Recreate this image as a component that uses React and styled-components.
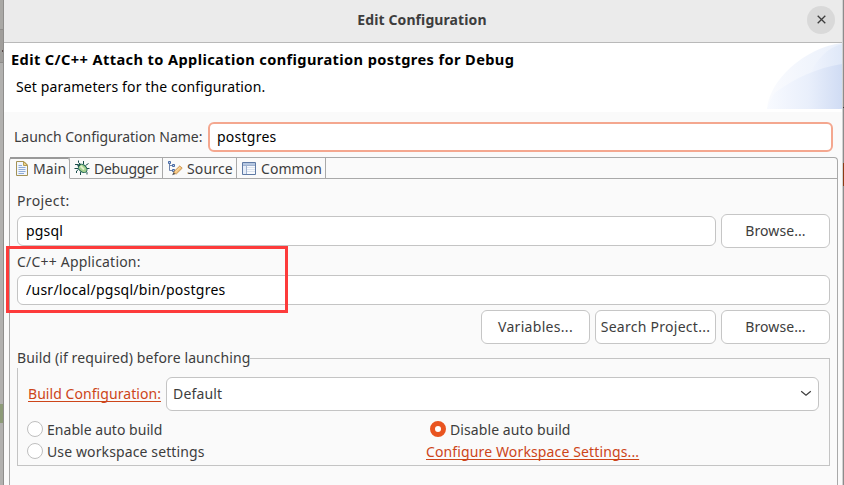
import React from 'react';
import styled, { createGlobalStyle, css } from 'styled-components';

const Global = createGlobalStyle`
  *, *::before, *::after { box-sizing: border-box; }
  body {
    margin: 0;
    overflow: hidden;
    font: 14px/20px "Noto Sans", "Open Sans", sans-serif;
    color: #3d3d3d;
    background: #fafafa;
  }
  button, input { font: inherit; color: inherit; }
`;

const Screen = styled.div`
  display: grid;
  grid-template-columns: 4px 838px 2px;
  width: 844px;
  height: 485px;
  overflow: hidden;
`;

const BackdropLeft = styled.div`
  border-right: 1px solid #8f8e8c;
  background:
    linear-gradient(#5a4a48, #5a4a48) 2px 50px / 1px 2px no-repeat,
    linear-gradient(
      #a9a8a5 0 29px, #8f8d8a 29px 30px, #a09e9b 30px 62px,
      #8f8d8a 62px 63px, #b2b1af 63px 404px,
      #8d9b78 404px 423px, #b2b1af 423px
    );
`;

const BackdropRight = styled.div`
  border-left: 1px solid #d2d2d2;
  background: linear-gradient(
    #8c8c8c 0 107px, #3a3a3a 107px 108px, #8c8c8c 108px 163px,
    #8a3b14 163px 186px, #8c8c8c 186px
  );
`;

const Dialog = styled.main`
  display: flex;
  flex-direction: column;
  background: #fafafa;
`;

const Text = styled.span`
  white-space: nowrap;
  letter-spacing: ${p => p.$ls || 0}px;
`;

const TitleBar = styled.header`
  display: grid;
  grid-template-columns: 1fr auto 1fr;
  align-items: center;
  height: 43px;
  padding: 0 7px 3px 5px;
  border-bottom: 1px solid #b9b9b9;
  background: #ebebeb;
  font-weight: 700;
`;

const CloseButton = styled.button`
  grid-column: 3;
  justify-self: end;
  display: grid;
  place-items: center;
  width: 28px;
  height: 28px;
  padding: 0;
  border: 0;
  border-radius: 50%;
  background: #d9d9d9;
`;

const Banner = styled.section`
  display: flex;
  justify-content: space-between;
  height: 69px;
  background: #fff;
  color: #000;
`;

const BannerText = styled.div`
  display: flex;
  flex-direction: column;
  gap: 8px;
  padding: 6px 0 0 7px;
`;

const BannerTitle = styled.h1`
  margin: 0;
  font-size: 14.6px;
  line-height: 20px;
  font-weight: 700;
`;

const BannerNote = styled.p`
  margin: 0;
  padding-left: 5px;
`;

const NameRow = styled.label`
  display: flex;
  align-items: center;
  justify-content: space-between;
  margin: 10px 9px 0 10px;
`;

const Input = styled.input`
  width: ${p => p.$w}px;
  height: 30px;
  padding: 0 8px 2px;
  border: 1px solid #c4c4c4;
  border-radius: 6px;
  outline: 0;
  background: #fff;
  color: #000;
  letter-spacing: ${p => p.$ls}px;
  ${p => p.$focused && css`
    padding: 0 7px 2px;
    border: 2px solid #f4a78f;
  `}
`;

const Folder = styled.section`
  flex: 1;
  display: flex;
  flex-direction: column;
  margin: 5px 4px 0 5px;
  border: 1px solid #a9a9a9;
  border-bottom: 0;
  border-radius: 4px 4px 0 0;
`;

const Tabs = styled.nav`
  display: flex;
  height: 21px;
`;

const Tab = styled.div`
  display: flex;
  align-items: center;
  width: ${p => p.$w}px;
  padding-left: ${p => p.$pad}px;
  gap: ${p => p.$gap}px;
  border-right: 1px solid #a9a9a9;
  border-bottom: 1px solid ${p => (p.$active ? 'transparent' : '#a9a9a9')};
  ${p => p.$active && css`
    border-top-right-radius: 2px;
    box-shadow: inset 0 1px #999, 0 -1px #999;
  `}
  svg { flex: none; }
  ${Text} { padding-top: 2px; }
`;

const TabRest = styled.div`
  flex: 1;
  border-bottom: 1px solid #a9a9a9;
`;

const Pane = styled.div`
  padding: 12px 7px 0;
`;

const FieldLabel = styled.div`
  height: 20px;
`;

const FieldRow = styled.div`
  display: flex;
  align-items: center;
  gap: 5px;
  height: 34px;
  margin: ${p => p.$m || '0'};
  justify-content: flex-end;
`;

const Button = styled.button`
  width: ${p => p.$w || 109}px;
  height: 34px;
  padding: 0 0 1px;
  border: 1px solid #c6c6c6;
  border-radius: 6px;
  background: #fff;
  white-space: nowrap;
  letter-spacing: ${p => p.$ls || 0}px;
`;

const Marked = styled.div`
  position: relative;
`;

const Highlight = styled.div`
  position: absolute;
  left: -11px;
  top: -6px;
  width: 282px;
  height: 67px;
  border: 3px solid #fd3b3b;
  pointer-events: none;
`;

const Group = styled.fieldset`
  height: 118px;
  margin: 4px 0 0;
  padding: 9px 10px 0 9px;
  border: 1px solid #c4c4c4;
  min-width: 0;
`;

const Legend = styled.legend`
  margin-left: -10px;
  padding: 0;
  height: 20px;
`;

const ConfigRow = styled.div`
  display: flex;
  align-items: center;
  justify-content: space-between;
  padding-left: 1px;
`;

const Link = styled.a`
  width: max-content;
  color: #cd4519;
  text-decoration: underline;
  text-decoration-thickness: 1px;
  text-underline-offset: 2px;
  text-decoration-skip-ink: none;
  white-space: nowrap;
  letter-spacing: ${p => p.$ls}px;
`;

const Select = styled.div`
  display: flex;
  align-items: center;
  justify-content: space-between;
  width: 653px;
  height: 34px;
  padding: 0 6px 1px 6px;
  border: 1px solid #c4c4c4;
  border-radius: 6px;
  background: #fff;
`;

const Options = styled.div`
  display: grid;
  grid-template-columns: 399px 1fr;
  grid-auto-rows: 22px;
  align-items: center;
  margin-top: 8px;
`;

const Radio = styled.label`
  display: flex;
  align-items: center;
  gap: 4px;
  padding-left: ${p => p.$indent || 0}px;
`;

const Dot = styled.span`
  width: 16px;
  height: 16px;
  border-radius: 50%;
  border: ${p => (p.$on ? '5px solid #e95420' : '1px solid #bfbfbf')};
  background: #fff;
  margin-bottom: 2px;
`;

const Swoosh = () => (
  <svg width="75" height="66" viewBox="0 0 75 66">
    <defs>
      <linearGradient id="back" x1="0" x2="1"><stop offset="0" stopColor="#fafbfe" /><stop offset="1" stopColor="#eaf0fb" /></linearGradient>
      <linearGradient id="mid" x1="0" x2="1"><stop offset="0" stopColor="#f0f4fd" /><stop offset="1" stopColor="#dfe8f8" /></linearGradient>
      <linearGradient id="front" x1="0" x2="1"><stop offset="0" stopColor="#f8faff" /><stop offset=".55" stopColor="#e9effb" /><stop offset="1" stopColor="#d0dcf4" /></linearGradient>
    </defs>
    <path d="M0 66C2 38 36 5 75 0V66Z" fill="url(#back)" />
    <path d="M43 31C50 16 60 5 75 1V24Z" fill="url(#mid)" />
    <path d="M0 66C2 59 5 53 9 49C28 35 50 25 75 21V66Z" fill="url(#front)" />
  </svg>
);

const PageIcon = () => (
  <svg width="12" height="15" viewBox="0 0 12 15">
    <path d="M.5 .5H8L11.5 4V14.5H.5Z" fill="#f1f6fd" stroke="#a39256" />
    <path d="M7.5 .5V4.5H11.5Z" fill="#ecd48a" stroke="#b59c54" />
    <path d="M2.5 4.5H6M2.5 6.5H9.5M2.5 8.5H9.5M2.5 10.5H9.5M2.5 12.5H8" stroke="#8fabd6" />
  </svg>
);

const BugIcon = () => (
  <svg width="16" height="16" viewBox="0 0 16 16" fill="none">
    <path d="M4.5 .5V2.5L6 4M9.5 1V4M1 4.5H4M.5 8.5H4M2.5 13V11L4.5 9.5M6.5 15V12M13 14.5V12.5L12 11.5M15.5 8.5H12.5M14.5 3.5L11.5 5.5" stroke="#1c4f4c" strokeWidth="1" />
    <ellipse cx="8.7" cy="8.4" rx="4.9" ry="3.5" transform="rotate(43 8.7 8.4)" fill="#a4d08e" stroke="#1c6452" />
    <path d="M6.5 6L10 9.5" stroke="#e2f1cc" strokeWidth="2" />
    <path d="M3.8 6.4L6.4 3.8" stroke="#1c5650" strokeWidth="2" />
  </svg>
);

const SourceIcon = () => (
  <svg width="16" height="16" viewBox="0 0 16 16" fill="none">
    <path d="M2.5 3V10.5H5M2.5 5.5H5" stroke="#6d83ad" />
    <path d="M1.5 1.5H3.5V3.5H1.5ZM5.5 4.5H7.5V6.5H5.5ZM5.5 9.5H7.5V11.5H5.5Z" fill="#b9cde9" stroke="#4a6ba5" />
    <path d="M6.5 13.5L7.5 11L12.9 5.8L15.2 8.2L9.5 13.8Z" fill="#f4c27a" stroke="#c08a48" strokeWidth=".8" />
    <path d="M8.3 12L13.3 7.1" stroke="#ffe5b4" />
    <path d="M5.2 15.2L6.4 12.2L8.4 14.1Z" fill="#55504b" />
  </svg>
);

const TableIcon = () => (
  <svg width="14" height="13" viewBox="0 0 14 13">
    <path d="M.5 .5H13.5V12.5H.5Z" fill="#f8fafd" stroke="#5f7aa5" />
    <path d="M1 1H13V3H1Z" fill="#b5c7e1" />
    <path d="M1 4H4V12H1Z" fill="#e6edf8" />
    <path d="M1 3.5H13M4.5 3.5V12" stroke="#9fb2d0" />
    <path d="M5 5.5H13M5 7.5H13M5 9.5H13" stroke="#dbe3ef" />
  </svg>
);

const TABS = [
  { name: 'Main', Icon: PageIcon, w: 60, pad: 6, gap: 5, ls: 0.1, active: true },
  { name: 'Debugger', Icon: BugIcon, w: 93, pad: 4, gap: 4, ls: -0.25 },
  { name: 'Source', Icon: SourceIcon, w: 74, pad: 4, gap: 4, ls: 0.15 },
  { name: 'Common', Icon: TableIcon, w: 89, pad: 5, gap: 5, ls: 0.06 },
];

export default function App() {
  return (
    <Screen>
      <Global />
      <BackdropLeft />
      <Dialog>
        <TitleBar>
          <span />
          <Text $ls={0.1}>Edit Configuration</Text>
          <CloseButton aria-label="Close">
            <svg width="9" height="9" viewBox="0 0 9 9"><path d="M.7 .7L8.3 8.3M8.3 .7L.7 8.3" stroke="#3d3d3d" strokeWidth="1.3" /></svg>
          </CloseButton>
        </TitleBar>
        <Banner>
          <BannerText>
            <BannerTitle><Text $ls={0.39}>Edit C/C++ Attach to Application configuration postgres for Debug</Text></BannerTitle>
            <BannerNote><Text $ls={0.13}>Set parameters for the configuration.</Text></BannerNote>
          </BannerText>
          <Swoosh />
        </Banner>
        <NameRow>
          <Text $ls={-0.03}>Launch Configuration Name:</Text>
          <Input $w={625} $ls={0.25} $focused defaultValue="postgres" />
        </NameRow>
        <Folder>
          <Tabs>
            {TABS.map(({ name, Icon, w, pad, gap, ls, active }) => (
              <Tab key={name} $w={w} $pad={pad} $gap={gap} $active={active}>
                <Icon />
                <Text $ls={ls}>{name}</Text>
              </Tab>
            ))}
            <TabRest />
          </Tabs>
          <Pane>
            <FieldLabel><Text $ls={0.38}>Project:</Text></FieldLabel>
            <FieldRow $m="3px 0 4px">
              <Input $w={699} $ls={0.2} defaultValue="pgsql" />
              <Button $ls={0.08}>Browse...</Button>
            </FieldRow>
            <Marked>
              <FieldLabel><Text $ls={0.2}>C/C++ Application:</Text></FieldLabel>
              <FieldRow $m="1px 0 0">
                <Input $w={813} $ls={0.26} defaultValue="/usr/local/pgsql/bin/postgres" />
              </FieldRow>
              <Highlight />
            </Marked>
            <FieldRow $m="3px 0 0">
              <Button $ls={0.3}>Variables...</Button>
              <Button $w={121} $ls={0.27}>Search Project...</Button>
              <Button $ls={0.08}>Browse...</Button>
            </FieldRow>
            <Group>
              <Legend><Text $ls={0.11}>Build (if required) before launching</Text></Legend>
              <ConfigRow>
                <Link $ls={0.06}>Build Configuration:</Link>
                <Select>
                  <Text $ls={0.16}>Default</Text>
                  <svg width="12" height="7" viewBox="0 0 12 7"><path d="M1.2 1.3L6 5.3L10.8 1.3" fill="none" stroke="#3d3d3d" strokeWidth="1.2" /></svg>
                </Select>
              </ConfigRow>
              <Options>
                <Radio><Dot /><Text $ls={0.03}>Enable auto build</Text></Radio>
                <Radio $indent={4}><Dot $on /><Text $ls={0.09}>Disable auto build</Text></Radio>
                <Radio><Dot /><Text $ls={0.12}>Use workspace settings</Text></Radio>
                <Link $ls={0.13}>Configure Workspace Settings...</Link>
              </Options>
            </Group>
          </Pane>
        </Folder>
      </Dialog>
      <BackdropRight />
    </Screen>
  );
}
